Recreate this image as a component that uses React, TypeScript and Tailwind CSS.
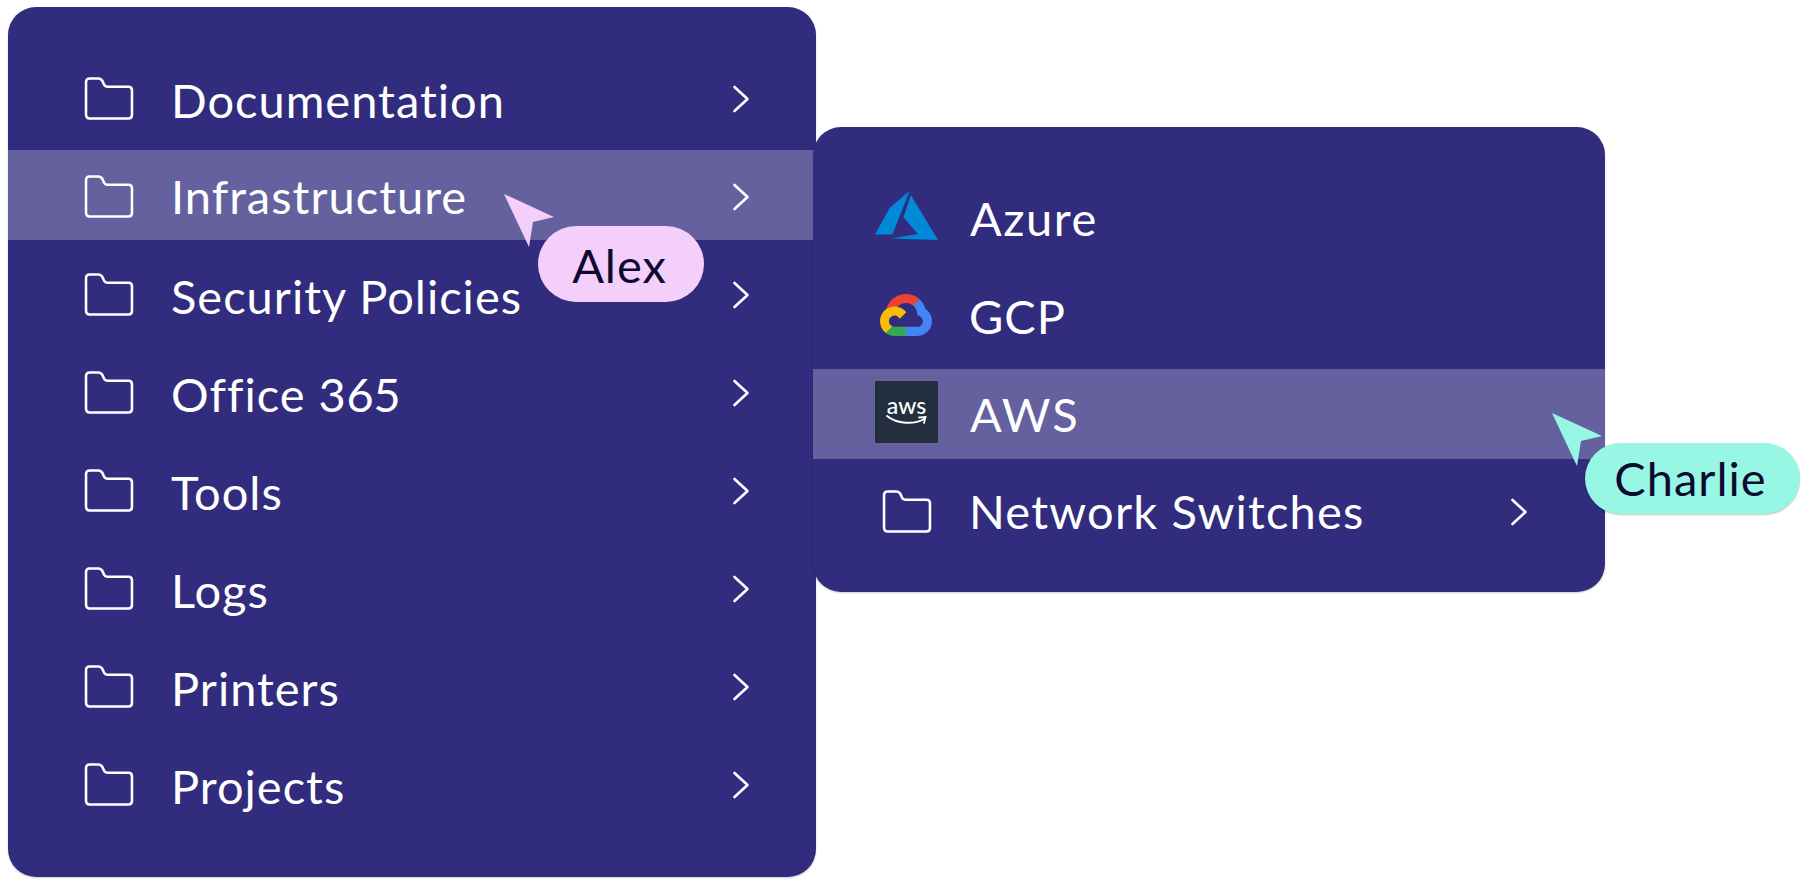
const mainItems = [
  "Documentation",
  "Infrastructure",
  "Security Policies",
  "Office 365",
  "Tools",
  "Logs",
  "Printers",
  "Projects",
];

const FolderIcon = () => (
  <svg width="50" height="43" viewBox="0 0 50 44" fill="none" className="shrink-0 -mt-[2px]">
    <path
      d="M1.500 5C1.500 3 3 1.500 5 1.500H14C16 1.500 17.500 2.500 18.500 4.500L20 8C20.600 9.500 21.500 10 23 10H45C47 10 48.500 11.500 48.500 13.500V39C48.500 41 47 42.500 45 42.500H5C3 42.500 1.500 41 1.500 39V5Z"
      stroke="white"
      strokeWidth="2.600"
      strokeLinejoin="round"
    />
  </svg>
);

const Chevron = () => (
  <svg width="18" height="28" viewBox="0 0 18 28" fill="none" className="shrink-0">
    <path d="M2.500 2L15.500 14L2.500 26" stroke="white" strokeWidth="2.600" strokeLinecap="round" strokeLinejoin="round" />
  </svg>
);

const AzureIcon = () => (
  <svg width="63" height="49" viewBox="0 0 188 146" className="shrink-0 -mt-[6px]">
    <path d="M103 0L44 50L0 130L52 130Z" fill="#0089d6" />
    <path d="M107 12L85 78L128 128L47 142L188 146Z" fill="#0089d6" />
  </svg>
);

const GcpIcon = () => (
  <svg width="52" height="42" viewBox="0 0 256 206" className="shrink-0 -mt-[2px]">
    <path fill="#EA4335" d="M170.252 56.819l22.253-22.253 1.483-9.37C153.437-11.677 88.976-7.496 52.42 33.92 42.267 45.423 34.734 59.764 30.717 74.573l7.97-1.123 44.505-7.34 3.436-3.513c19.797-21.742 53.27-24.667 76.128-6.168l7.496.39z" />
    <path fill="#4285F4" d="M224.205 73.918c-5.115-18.836-15.616-35.769-30.217-48.722l-31.232 31.232c13.188 10.776 20.701 27.01 20.379 44.037v5.544c15.351 0 27.797 12.445 27.797 27.796 0 15.352-12.446 27.485-27.797 27.485h-55.671l-5.466 5.934v33.34l5.466 5.231h55.671c39.93.311 72.552-31.494 72.863-71.424.188-24.203-11.745-46.893-31.793-60.453" />
    <path fill="#34A853" d="M71.87 205.796h55.593V161.29H71.87c-3.961-.001-7.797-.852-11.399-2.498l-7.887 2.42-22.409 22.253-1.952 7.574c12.567 9.489 27.9 14.825 43.647 14.757" />
    <path fill="#FBBC05" d="M71.87 61.425C31.94 61.664-.237 94.228.001 134.159c.134 22.298 10.547 43.288 28.222 56.88l32.248-32.247c-13.991-6.321-20.208-22.786-13.887-36.776 6.32-13.99 22.786-20.207 36.775-13.887 6.161 2.784 11.096 7.72 13.88 13.887l32.248-32.248C115.364 71.476 94.273 61.32 71.87 61.425" />
  </svg>
);

const AwsIcon = () => (
  <div className="w-[63px] h-[62px] shrink-0 -mt-[4px] bg-[#232f3e] flex flex-col items-center justify-center">
    <span className="text-white text-[23px] leading-[17px] font-medium font-['Lato',sans-serif]">aws</span>
    <svg width="42" height="13" viewBox="0 0 42 13" fill="none">
      <path d="M1 2C11 10 28 11 38 5" stroke="white" strokeWidth="2" strokeLinecap="round" />
      <path d="M33 3.500L39.500 3L38 9" stroke="white" strokeWidth="1.800" strokeLinecap="round" />
    </svg>
  </div>
);

const Cursor = ({ color }: { color: string }) => (
  <svg width="52" height="55" viewBox="0 0 52 55">
    <path d="M1 1L51 24L30 29L26 54Z" fill={color} />
  </svg>
);

const App = () => {
  return (
    <div className="relative w-[1800px] h-[886px] bg-white overflow-hidden font-['Lato',sans-serif] flex items-start">
      <div className="ml-[8px] mt-[7px] w-[808px] h-[870px] pt-[45px] shrink-0 rounded-[28px] bg-[#312c7e] shadow-[0_1px_2px_rgba(0,0,0,0.2)] flex flex-col gap-[8px]">
        {mainItems.map((item) => (
          <div
            key={item}
            className={
              item === "Infrastructure"
                ? "h-[90px] pt-[4px] pl-[76px] pr-[66px] flex items-center bg-[#65619f]"
                : "h-[90px] pt-[4px] pl-[76px] pr-[66px] flex items-center"
            }
          >
            <FolderIcon />
            <span
              className={
                item === "Infrastructure"
                  ? "ml-[37px] -mt-[2px] flex-1 text-white text-[47px] leading-none tracking-[1px] proportional-nums"
                  : "ml-[37px] mt-[3px] flex-1 text-white text-[47px] leading-none tracking-[1px] proportional-nums"
              }
            >
              {item}
            </span>
            <Chevron />
          </div>
        ))}
      </div>

      <div className="-ml-[3px] mt-[127px] w-[792px] h-[465px] pt-[46px] shrink-0 rounded-[28px] bg-[#312c7e] shadow-[0_1px_2px_rgba(0,0,0,0.2)] flex flex-col gap-[8px]">
        <div className="h-[90px] pl-[62px] flex items-center">
          <AzureIcon />
          <span className="ml-[32px] text-white text-[47px] leading-none tracking-[1.500px]">Azure</span>
        </div>
        <div className="h-[90px] pl-[67px] flex items-center">
          <GcpIcon />
          <span className="ml-[37px] text-white text-[47px] leading-none tracking-[1px]">GCP</span>
        </div>
        <div className="h-[90px] pl-[62px] flex items-center bg-[#65619f]">
          <AwsIcon />
          <span className="ml-[32px] text-white text-[47px] leading-none tracking-[2px]">AWS</span>
        </div>
        <div className="h-[90px] pl-[69px] pr-[77px] flex items-center">
          <FolderIcon />
          <span className="ml-[37px] -mt-[2px] flex-1 text-white text-[47px] leading-none tracking-[1.200px]">Network Switches</span>
          <Chevron />
        </div>
      </div>

      <div className="absolute left-[503px] top-[193px]">
        <Cursor color="#f5cffc" />
      </div>
      <div className="absolute left-[538px] top-[226px] w-[166px] h-[76px] pt-[3px] pr-[3px] rounded-[38px] bg-[#f5cffc] flex items-center justify-center text-[#0c0a2e] text-[47px] leading-none tracking-[1px]">
        Alex
      </div>

      <div className="absolute left-[1551px] top-[412px]">
        <Cursor color="#98f7e4" />
      </div>
      <div className="absolute left-[1585px] top-[443px] w-[215px] h-[71px] pr-[4px] rounded-[36px] bg-[#98f7e4] shadow-[0_1px_2px_rgba(0,0,0,0.25)] flex items-center justify-center text-[#0c0a2e] text-[47px] leading-none tracking-[1px]">
        Charlie
      </div>
    </div>
  );
};

export default App;
